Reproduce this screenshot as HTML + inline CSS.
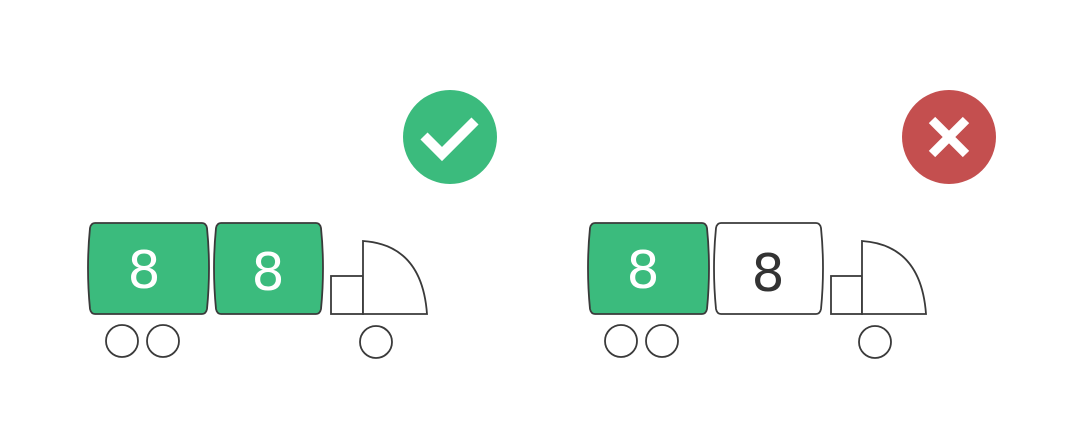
<!DOCTYPE html>
<html><head><style>body{margin:0;background:#fff}</style></head><body>
<svg width="1084" height="424" viewBox="0 0 1084 424" xmlns="http://www.w3.org/2000/svg" font-family="DejaVu Sans, Liberation Sans, sans-serif">
<g stroke="#3a3a3a" stroke-width="1.8">
<path d="M95,223 L202,223 Q206,223 207,228 Q211,268 207,309 Q206,314 202,314 L95,314 Q91,314 90,309 Q86,268 90,228 Q91,223 95,223 Z" fill="#3bbb7d"/>
<path d="M221,223 L316,223 Q320,223 321,228 Q325,268 321,309 Q320,314 316,314 L221,314 Q217,314 216,309 Q212,268 216,228 Q217,223 221,223 Z" fill="#3bbb7d"/>
<rect x="331" y="276" width="32" height="38" fill="#fff"/>
<path d="M363,314 L363,241 Q422,245 427,314 Z" fill="#fff"/>
<circle cx="122" cy="341" r="16" fill="#fff"/>
<circle cx="163" cy="341" r="16" fill="#fff"/>
<circle cx="376" cy="342" r="16" fill="#fff"/>
</g>
<text x="144" y="288" font-size="52" fill="#fff" text-anchor="middle">8</text>
<text x="268" y="290" font-size="52" fill="#fff" text-anchor="middle">8</text>
<g stroke="#3a3a3a" stroke-width="1.8">
<path d="M595,223 L702,223 Q706,223 707,228 Q711,268 707,309 Q706,314 702,314 L595,314 Q591,314 590,309 Q586,268 590,228 Q591,223 595,223 Z" fill="#3bbb7d"/>
<path d="M721,223 L816,223 Q820,223 821,228 Q825,268 821,309 Q820,314 816,314 L721,314 Q717,314 716,309 Q712,268 716,228 Q717,223 721,223 Z" fill="#fff"/>
<rect x="831" y="276" width="31" height="38" fill="#fff"/>
<path d="M862,314 L862,241 Q921,245 926,314 Z" fill="#fff"/>
<circle cx="621" cy="341" r="16" fill="#fff"/>
<circle cx="662" cy="341" r="16" fill="#fff"/>
<circle cx="875" cy="342" r="16" fill="#fff"/>
</g>
<text x="643" y="288" font-size="52" fill="#fff" text-anchor="middle">8</text>
<text x="768" y="291" font-size="52" fill="#333" text-anchor="middle">8</text>
<circle cx="450" cy="137" r="47" fill="#3bbb7d"/>
<path d="M424,136 L442,154 L475,121" stroke="#fff" stroke-width="10" fill="none"/>
<circle cx="949" cy="137" r="47" fill="#c44f4f"/>
<path d="M932,120 L966,154 M966,120 L932,154" stroke="#fff" stroke-width="9"/>
</svg>
</body></html>
